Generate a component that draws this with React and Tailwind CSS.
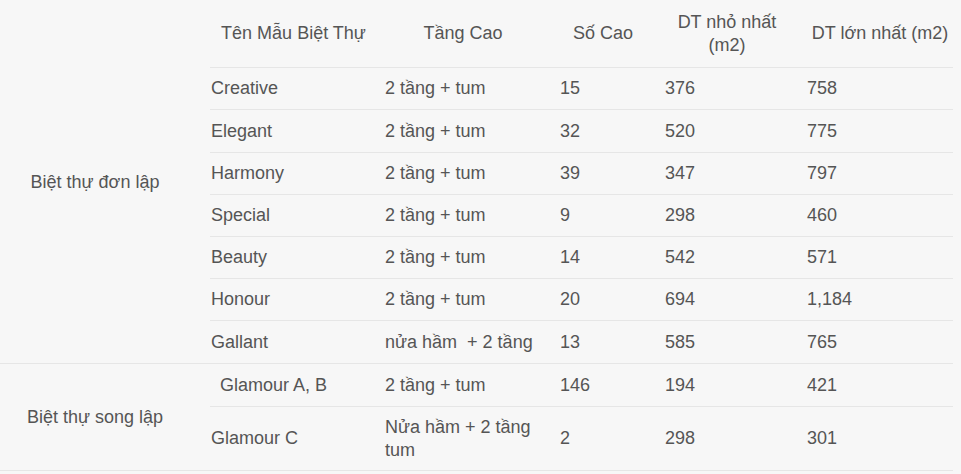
import React from "react";

// Bảng mẫu biệt thự
const groups = [
  {
    label: "Biệt thự đơn lập",
    labelClass: "items-start pt-[104px]",
    rows: [
      { name: "Creative", floors: "2 tầng + tum", count: "15", min: "376", max: "758", h: "h-[42px]" },
      { name: "Elegant", floors: "2 tầng + tum", count: "32", min: "520", max: "775", h: "h-[43px]" },
      { name: "Harmony", floors: "2 tầng + tum", count: "39", min: "347", max: "797", h: "h-[42px]" },
      { name: "Special", floors: "2 tầng + tum", count: "9", min: "298", max: "460", h: "h-[42px]" },
      { name: "Beauty", floors: "2 tầng + tum", count: "14", min: "542", max: "571", h: "h-[42px]" },
      { name: "Honour", floors: "2 tầng + tum", count: "20", min: "694", max: "1,184", h: "h-[42px]" },
      { name: "Gallant", floors: "nửa hầm\u00a0 + 2 tầng", count: "13", min: "585", max: "765", h: "h-[43px]" },
    ],
  },
  {
    label: "Biệt thự song lập",
    labelClass: "items-center",
    rows: [
      { name: "Glamour A, B", floors: "2 tầng + tum", count: "146", min: "194", max: "421", h: "h-[42px]", indent: true },
      { name: "Glamour C", floors: "Nửa hầm + 2 tầng tum", count: "2", min: "298", max: "301", h: "h-[64px]" },
    ],
  },
];

const Row = ({ row, noTop }) => (
  <div
    className={`flex items-center ${row.h} ${noTop ? "" : "border-t border-[#e6e6e6]"}`}
  >
    <div className={`w-[167px] ${row.indent ? "pl-[10px]" : "pl-[1px]"}`}>{row.name}</div>
    <div className="w-[172px] pl-[8px] pr-[10px]">{row.floors}</div>
    <div className="w-[108px] pl-[11px]">{row.count}</div>
    <div className="w-[140px] pl-[8px]">{row.min}</div>
    <div className="w-[156px] pl-[10px]">{row.max}</div>
  </div>
);

export default function App() {
  return (
    <div
      className="min-h-screen w-full bg-[#f7f7f7] text-[#555] text-[18px] leading-[23px]"
      style={{ fontFamily: '"Liberation Sans", Arial, sans-serif' }}
    >
      <div className="w-[953px]">
        {/* header */}
        <div className="flex h-[67px] items-center">
          <div className="w-[210px]" />
          <div className="w-[167px] text-center">Tên Mẫu Biệt Thự</div>
          <div className="w-[172px] text-center">Tầng Cao</div>
          <div className="w-[108px] text-center">Số Cao</div>
          <div className="w-[140px] px-[8px] text-center">DT nhỏ nhất (m2)</div>
          <div className="w-[156px] pl-[10px] text-center">DT lớn nhất (m2)</div>
        </div>

        {groups.map((g, gi) => (
          <div
            key={g.label}
            className={`flex ${gi > 0 ? "border-t border-b border-[#e6e6e6]" : ""}`}
          >
            <div className={`flex w-[210px] justify-center pr-[20px] ${g.labelClass}`}>
              {g.label}
            </div>
            <div className="flex-1">
              {g.rows.map((r, i) => (
                <Row key={r.name} row={r} noTop={gi > 0 && i === 0} />
              ))}
            </div>
          </div>
        ))}
      </div>
    </div>
  );
}
